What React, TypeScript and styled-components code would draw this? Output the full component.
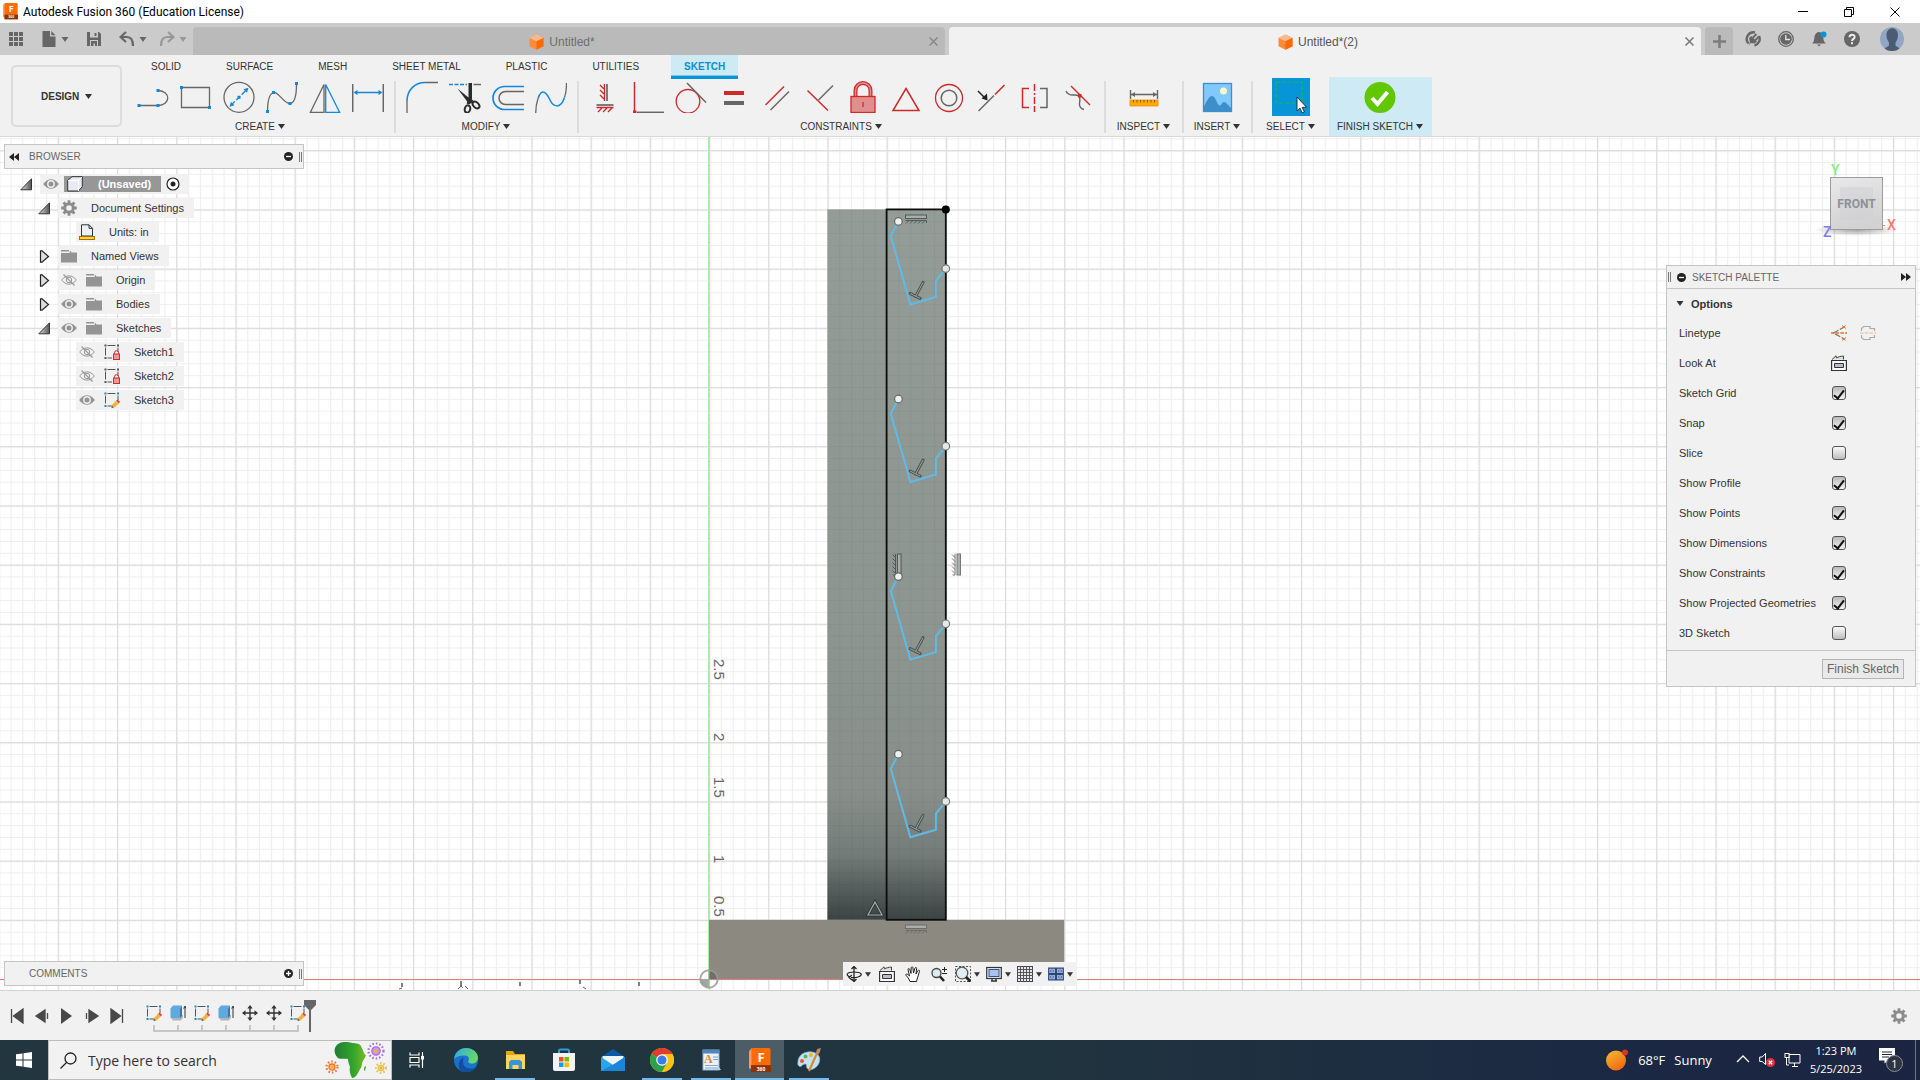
import React, { useState } from "react";
import styled, { createGlobalStyle } from "styled-components";

const UI = `"Liberation Sans", Arial, sans-serif`;
const SYS = `"Open Sans", "Noto Sans", sans-serif`;
const BLUE = "#1287e0";
const GREY = "#666";
const RED = "#cf2a2a";

const Global = createGlobalStyle`
  * { box-sizing: border-box; }
  body { margin: 0; overflow: hidden; font-family: ${UI}; color: #333; }
  button, input, select { font: inherit; color: inherit; margin: 0; }
  button { padding: 0; border: 0; background: none; display: flex; align-items: center; justify-content: center; }
  svg { display: block; flex: none; }
`;

const Shell = styled.div`
  height: 100vh;
  display: flex;
  flex-direction: column;
`;

/* ---------- window title ---------- */
const TitleBar = styled.header`
  height: 23px;
  padding-left: 3px;
  display: flex;
  align-items: center;
  gap: 5px;
  background: #fff;
  color: #000;
  font: 12px Roboto, ${SYS};
`;
const WindowButtons = styled.div`
  margin-left: auto;
  padding-right: 2px;
  display: flex;
`;
const WindowButton = styled.button`
  width: 46px;
  height: 20px;
`;

/* ---------- document tabs ---------- */
const TabStrip = styled.div`
  height: 32px;
  display: flex;
  background: #cbcbcb;
`;
const QuickBar = styled.div`
  width: 193px;
  padding-left: 8px;
  display: flex;
  align-items: center;
  gap: 17px;
`;
const QuickPair = styled.div`
  display: flex;
  gap: 12px;
`;
const QuickButton = styled.button<{ $dim?: boolean }>`
  gap: 4px;
  opacity: ${(p) => (p.$dim ? 0.5 : 1)};
`;
const Docs = styled.nav`
  flex: 1;
  display: flex;
  gap: 4px;
  padding-top: 4px;
`;
const DocTab = styled.div<{ $active?: boolean }>`
  flex: 1;
  display: flex;
  align-items: center;
  border-radius: 4px 4px 0 0;
  background: ${(p) => (p.$active ? "#f1f1f1" : "#bababa")};
  color: ${(p) => (p.$active ? "#555" : "#6e6e6e")};
  font-size: 12px;
`;
const DocTitle = styled.button`
  flex: 1;
  height: 100%;
  padding: 2px 0 0 10px;
  gap: 5px;
`;
const DocClose = styled.button`
  width: 24px;
  height: 24px;
`;
const Account = styled.div`
  width: 219px;
  padding: 0 15px 0 4px;
  display: flex;
  align-items: center;
`;
const NewTab = styled.button`
  width: 28px;
  height: 28px;
  margin: 4px 3px 0 0;
  border-radius: 4px 4px 0 0;
  background: #bababa;
`;
const AccountButton = styled.button`
  width: 33px;
  height: 28px;
  &:last-child { width: 24px; margin-left: 12px; }
`;

/* ---------- ribbon ---------- */
const Ribbon = styled.section`
  height: 82px;
  display: flex;
  background: #f1f1f1;
  border-bottom: 1px solid #d9d9d9;
  font-size: 10px;
`;
const Workspace = styled.label`
  width: 111px;
  height: 62px;
  margin: 10px 5px 9px 11px;
  border: 2px solid #dcdcdc;
  border-radius: 5px;
  display: flex;
  align-items: center;
  justify-content: center;
  gap: 5px;
  font-weight: bold;
`;
const WorkspaceSelect = styled.select`
  appearance: none;
  border: 0;
  padding: 0;
  background: none;
`;
const RibbonMain = styled.div`
  flex: 1;
`;
const RibbonTabs = styled.nav`
  height: 22px;
  padding-left: 11px;
  display: flex;
  gap: 19px;
`;
const RibbonTab = styled.button<{ $active?: boolean }>`
  height: 24px;
  padding: 2px 13px ${(p) => (p.$active ? 0 : 4)}px;
  ${(p) =>
    p.$active &&
    `background: #cdeaf5; color: #0a8fd0; font-weight: bold; border-bottom: 3px solid #0696d7; box-shadow: inset 0 -1px #7cc6e8;`}
`;
const Groups = styled.div`
  display: flex;
`;
const Group = styled.div<{ $w?: number; $last?: boolean; $highlight?: boolean }>`
  height: 52px;
  margin-top: 4px;
  padding: 0 5px 0 4px;
  ${(p) => p.$w && `width: ${p.$w}px;`}
  ${(p) => !p.$last && "border-right: 2px solid #dcdcdc;"}
  ${(p) => p.$highlight && "background: #cdeaf5; height: 59px; margin-top: 0; padding-top: 4px;"}
  display: flex;
  flex-direction: column;
  align-items: center;
`;
const Tools = styled.div`
  height: 32px;
  display: flex;
  align-items: center;
`;
const Tool = styled.button`
  width: 43px;
  height: 32px;
`;
const SelectTool = styled.button`
  width: 38px;
  height: 38px;
  background: #0696d7;
`;
const GroupLabel = styled.button`
  height: 14px;
  margin-top: 6px;
  gap: 3px;
  white-space: nowrap;
`;

/* ---------- viewport ---------- */
const Viewport = styled.main`
  flex: 1;
  min-height: 0;
  position: relative;
  background: #fff;
`;
const Scene = styled.svg`
  position: absolute;
  inset: 0;
  width: 100%;
  height: 100%;
`;
const Overlay = styled.div`
  position: relative;
  height: 100%;
  padding: 7px 4px 4px;
  display: grid;
  grid-template-columns: 1fr auto 1fr;
`;
const Side = styled.div<{ $right?: boolean }>`
  width: ${(p) => (p.$right ? 250 : 300)}px;
  justify-self: ${(p) => (p.$right ? "end" : "start")};
  display: flex;
  flex-direction: column;
`;
const PanelBar = styled.div`
  height: 25px;
  padding: 0 1px 0 4px;
  display: flex;
  align-items: center;
  gap: 6px;
  border: 1px solid #c4c4c4;
  background: #f1f1f1;
  color: #666;
  font-size: 10px;
`;
const PanelName = styled.h2`
  margin: 0;
  flex: 1;
  font-size: 10px;
  font-weight: normal;
`;
const BrowserName = styled(PanelName)`
  padding-left: 4px;
`;
const Comments = styled(PanelBar)`
  margin-top: auto;
  padding-left: 24px;
`;
const Grip = styled.span`
  width: 3px;
  height: 10px;
  border: solid #777;
  border-width: 0 1px;
`;
const Tree = styled.ul`
  margin: 3px 0 0;
  padding: 0;
  list-style: none;
  font-size: 11px;
`;
const TreeRow = styled.li<{ $level: number }>`
  height: 24px;
  padding-left: ${(p) => 16 + p.$level * 18}px;
  display: flex;
  align-items: center;
`;
const Twisty = styled.button`
  width: 12px;
  margin-right: 8px;
`;
const TwistyGap = styled.span`
  width: 20px;
`;
const Chip = styled.div`
  height: 20px;
  padding: 0 10px 0 3px;
  display: flex;
  align-items: center;
  gap: 9px;
  background: #f1f1f1;
`;
const RootChip = styled(Chip)`
  gap: 5px;
  padding-right: 8px;
`;
const NodeName = styled.span`
  margin-left: 5px;
`;
const Selected = styled.span`
  height: 16px;
  padding: 0 10px 0 3px;
  display: flex;
  align-items: center;
  gap: 15px;
  background: #979797;
  color: #fff;
  font-weight: bold;
`;
const NavBar = styled.div`
  align-self: end;
  height: 24px;
  padding: 0 4px 0 3px;
  display: flex;
  align-items: center;
  gap: 6px;
  background: #f1f1f1;
`;
const NavButton = styled.button<{ $menu?: boolean }>`
  gap: 3px;
  padding: 0 ${(p) => (p.$menu ? 0 : 2)}px;
`;
const CubeBox = styled.div`
  height: 121px;
  padding-top: 11px;
  display: flex;
  justify-content: flex-end;
`;
const Palette = styled.section`
  border: 1px solid #c4c4c4;
  background: #f1f1f1;
`;
const PaletteBar = styled(PanelBar)`
  height: 23px;
  border-width: 0 0 1px;
  padding: 0 4px 0 1px;
`;
const PaletteBody = styled.div`
  padding: 0 12px 2px;
  font-size: 11px;
`;
const OptionsHead = styled.button`
  height: 29px;
  gap: 7px;
  margin-left: -3px;
  font-weight: bold;
`;
const OptionRow = styled.div`
  height: 30px;
  display: flex;
  align-items: center;
`;
const OptionLabel = styled.label`
  width: 152px;
`;
const OptionControls = styled.div`
  display: flex;
  gap: 13px;
`;
const Check = styled.input`
  appearance: none;
  width: 14px;
  height: 14px;
  margin-left: 1px;
  border: 1px solid #555;
  border-radius: 3px;
  background: linear-gradient(#b9b9b9, #f4f4f4);
  display: grid;
  place-items: center;
  &:not(:checked) { background: linear-gradient(#fafafa, #bdbdbd); }
  &:checked::after {
    content: "";
    width: 4px;
    height: 9px;
    border: solid #111;
    border-width: 0 2px 2px 0;
    transform: rotate(38deg);
  }
`;
const PaletteFoot = styled.div`
  height: 36px;
  padding-right: 11px;
  border-top: 1px solid #c4c4c4;
  display: flex;
  align-items: center;
  justify-content: flex-end;
`;
const FinishButton = styled.button`
  height: 20px;
  padding: 0 4px;
  border: 1px solid #b4b4b4;
  background: #e9e9e9;
  color: #666;
  font-size: 12px;
`;

/* ---------- timeline ---------- */
const Timeline = styled.section`
  height: 50px;
  padding: 0 13px 0 4px;
  display: flex;
  align-items: center;
  background: #f1f1f1;
  border-top: 1px solid #d0d0d0;
`;
const Playback = styled.button`
  width: 25px;
  height: 30px;
`;
const History = styled.div`
  margin-left: 13px;
  display: flex;
  align-items: flex-end;
  height: 32px;
`;
const Feature = styled.button`
  width: 24px;
  flex-direction: column;
  gap: 3px;
`;
const Marker = styled.svg`
  margin-left: -6px;
`;
const Settings = styled.button`
  margin-left: auto;
`;

/* ---------- taskbar ---------- */
const Taskbar = styled.footer`
  height: 40px;
  display: flex;
  background: linear-gradient(90deg, #21363f, #20343f 55%, #1b2843 85%, #1b2541);
  color: #fff;
  font-family: ${SYS};
`;
const Start = styled.button`
  width: 48px;
`;
const Search = styled.label`
  width: 344px;
  padding: 0 4px 0 11px;
  display: flex;
  align-items: center;
  gap: 11px;
  background: #f2f2f2;
  border: 1px solid #bdbdbd;
`;
const SearchInput = styled.input`
  flex: 1;
  min-width: 0;
  padding: 0;
  border: 0;
  outline: 0;
  background: none;
  font-size: 14px;
  &::placeholder { color: #333; opacity: 1; }
`;
const TaskButton = styled.button<{ $open?: boolean; $current?: boolean }>`
  width: 49px;
  position: relative;
  ${(p) => p.$current && "background: #4d5d66;"}
  ${(p) =>
    p.$open &&
    `&::after { content: ""; position: absolute; bottom: 0; height: 2px; background: #76b9ed; left: ${
      p.$current ? 0 : 5
    }px; right: ${p.$current ? 0 : 4}px; }`}
`;
const Tray = styled.div`
  margin-left: auto;
  padding-right: 4px;
  display: flex;
  align-items: center;
  font-size: 13px;
`;
const Weather = styled.button`
  gap: 9px;
  margin-right: 24px;
`;
const TrayIcons = styled.div`
  display: flex;
  gap: 9px;
  margin-right: 9px;
`;
const Clock = styled.time`
  font-size: 11px;
  line-height: 18px;
  text-align: center;
  margin-right: 17px;
`;
const ShowDesktop = styled.span`
  width: 1px;
  height: 40px;
  margin-left: 12px;
  background: #6c7587;
`;

/* ---------- small drawings ---------- */
const Caret = ({ w = 7, c = "#333" }: { w?: number; c?: string }) => (
  <svg width={w} height="5" viewBox="0 0 7 5"><path d="M0 0h7L3.5 5z" fill={c} /></svg>
);
const Ico = ({ s = 16, h, children }: { s?: number; h?: number; children: React.ReactNode }) => (
  <svg width={s} height={h ?? s} viewBox={`0 0 ${s} ${h ?? s}`} fill="none">{children}</svg>
);
const Dot = ({ x, y, c = BLUE }: { x: number; y: number; c?: string }) => (
  <rect x={x - 1.5} y={y - 1.5} width="3" height="3" fill={c} />
);
const T = ({ children }: { children: React.ReactNode }) => (
  <svg width="32" height="32" viewBox="0 0 32 32" fill="none" strokeWidth="1.3">{children}</svg>
);
const Cube = () => (
  <Ico s={15} h={16}>
    <path d="M7.5 .5L14.5 4v8.300L7.5 15.800 .5 12.300V4z" fill="#ff8a3c" />
    <path d="M7.5 .5L14.5 4 7.5 7.300 .5 4z" fill="#ffb98a" />
    <path d="M14.5 4v8.300L7.5 15.800V7.300z" fill="#ff6a00" />
  </Ico>
);
const Cross = ({ s = 9, c = "#777", w = 1.5 }: { s?: number; c?: string; w?: number }) => (
  <Ico s={s}><path d={`M.5 .5L${s - 0.5} ${s - 0.5}M${s - 0.5} .5L.5 ${s - 0.5}`} stroke={c} strokeWidth={w} /></Ico>
);
const Gear = () => (
  <Ico>
    <circle cx="8" cy="8" r="4.300" stroke="#8c8c8c" strokeWidth="3" />
    {[0, 45, 90, 135].map((a) => (
      <path key={a} d="M8 .2v3M8 12.800v3" stroke="#8c8c8c" strokeWidth="2.800" transform={`rotate(${a} 8 8)`} />
    ))}
  </Ico>
);
const Eye = ({ off }: { off?: boolean }) => (
  <Ico>
    {off ? (
      <>
        <path d="M.7 8C4.500 2.500 11.500 2.500 15.300 8 11.500 13.500 4.500 13.500 .7 8z" stroke="#999" />
        <circle cx="8" cy="8" r="2.700" stroke="#999" />
        <path d="M2.500 2.500l11 11" stroke="#999" strokeWidth="1.200" />
      </>
    ) : (
      <>
        <path d="M.2 8C4.200 1.700 11.800 1.700 15.800 8 11.800 14.300 4.200 14.300 .2 8z" fill="#949494" />
        <circle cx="8" cy="8" r="3.200" fill="#949494" stroke="#f1f1f1" strokeWidth="1.400" />
      </>
    )}
  </Ico>
);
const Folder = () => (
  <Ico>
    <path d="M0 2h8v1.500H0zM9 2.500l1.500 2H16V14.500H0V5h8.500z" fill="#949494" />
  </Ico>
);
const SketchIcon = ({ locked }: { locked?: boolean }) => {
  const c = locked ? "#555" : BLUE;
  return (
    <Ico>
      <path d="M3.500 1.500h8M1.500 3.500v8M14 3.500V8M3.500 14H8" stroke="#555" />
      <rect width="2" height="2" x=".5" y=".5" fill={c} />
      <rect width="2" height="2" x="13" y=".5" fill={c} />
      <rect width="2" height="2" x=".5" y="13" fill={c} />
      {locked ? (
        <>
          <path d="M10.500 10V8.700a2 2 0 0 1 4 0V10" stroke={RED} />
          <rect x="9.500" y="10" width="6" height="5.500" fill="#e79a9a" stroke={RED} />
        </>
      ) : (
        <>
          <path d="M7.500 16l.8-3.500 4-4 2.700 2.700-4 4z" fill="#f0b541" />
          <path d="M12.300 8.800l1.300-1.300L16 10l-1.200 1.200z" fill="#e33" />
          <path d="M7.500 16l.6-2.200 1.700 1.700z" fill="#555" />
        </>
      )}
    </Ico>
  );
};
const ExtrudeIcon = () => (
  <Ico>
    <path d="M1 13l2 2.500h8l2-3V10H1z" fill="#b5b5b5" />
    <path d="M.5 3.500L3 .5h9l-2 3V13H.5z" fill="#5ea9de" />
    <path d="M10 3.500L12 .5V11L10 13z" fill="#2f7db8" />
    <path d="M15 13V2M13.700 3.500L15 1l1 2.500" stroke="#333" />
  </Ico>
);
const MoveIcon = () => (
  <Ico>
    <path d="M8 2v12M2 8h12" stroke="#333" strokeWidth="1.400" />
    <path d="M8 0l2.700 3.500H5.300zM8 16l2.700-3.500H5.300zM0 8l3.500-2.700v5.400zM16 8l-3.500-2.700v5.400z" fill="#333" />
  </Ico>
);
const Round = ({ plus }: { plus?: boolean }) => (
  <Ico s={9}>
    <circle cx="4.500" cy="4.500" r="4.500" fill="#222" />
    <path d={plus ? "M2 4.500h5M4.500 2v5" : "M2 4.500h5"} stroke="#fff" strokeWidth="1.300" />
  </Ico>
);
const Twist = ({ open }: { open?: boolean }) => (
  <Ico s={12} h={13}>
    {open ? (
      <path d="M11.500 .8v11H.8z" fill="url(#twist)" stroke="#333" />
    ) : (
      <path d="M2.500 .8H4l6.500 5.700L4 12.200H2.500z" fill="#ddd" stroke="#222" strokeWidth="1.200" />
    )}
    <defs><linearGradient id="twist"><stop stopColor="#ddd" /><stop offset="1" stopColor="#555" /></linearGradient></defs>
  </Ico>
);
const LookAt = () => (
  <Ico>
    <path d="M.6 5.500h14.800v10H.6z" fill="#fff" stroke="#333" strokeWidth="1.200" />
    <path d="M3.500 8.500h9v4h-9z" fill="#b9bccb" stroke="#333" />
    <path d="M1 4.500L5 .8l.5 2c2-1 4-1.500 7-1.800v3.500" fill="#ddd" stroke="#444" />
  </Ico>
);
const FusionLogo = ({ s }: { s: number }) => (
  <svg width={s} height={s * 1.1} viewBox="0 0 22 24">
    <path d="M0 3l3-3v20l-2 1-1-1z" fill="#ff9a55" />
    <rect x="2.500" width="19" height="18" rx="1.500" fill="#ff6b00" />
    <path d="M2 17h20v7H2z" fill="#8c3400" />
    <text x="12" y="13.500" fontFamily={SYS} fontWeight="bold" fontSize="13" fill="#fff" textAnchor="middle">F</text>
    <text x="12" y="22.500" fontFamily={SYS} fontWeight="bold" fontSize="5" fill="#fff" textAnchor="middle">360</text>
  </svg>
);

/* ---------- ribbon tools ---------- */
const CREATE: [string, React.ReactNode][] = [
  ["Line", <T><path d="M2 24.500h19c13-.5 13-14.500 0-15" stroke={GREY} /><Dot x={2} y={24.500} /><Dot x={21} y={24.500} /><Dot x={21} y={9.500} /></T>],
  ["Rectangle", <T><path d="M1.500 6.500h28v20h-28z" stroke={GREY} /><Dot x={1.500} y={6.500} /><Dot x={29.500} y={26.500} /></T>],
  ["Circle", <T><circle cx="16" cy="16.300" r="15" stroke={GREY} /><path d="M8 24.300L24 8.300" stroke={BLUE} strokeDasharray="5.500 2" /><path d="M25.500 6.800l-1.500 5-3.500-3.500zM6.500 25.800l1.500-5 3.500 3.500z" fill={BLUE} /><Dot x={16} y={16.300} /></T>],
  ["Spline", <T><path d="M1.500 31C1.500 22 3 13 7.500 11.500S18 23 24 22.500 30.500 9 30.500 3" stroke={GREY} /><Dot x={1.500} y={30.500} /><Dot x={7.500} y={11.500} /><Dot x={24} y={22.500} /><Dot x={30.500} y={2.500} /></T>],
  ["Mirror", <T><path d="M15 3.500v28H1.300z" stroke={GREY} /><path d="M16.700 3.500v28h14z" stroke={BLUE} /></T>],
  ["Dimension", <T><path d="M.7 3v28M31.300 3v28" stroke={GREY} strokeWidth="1.500" /><path d="M3 11.500h26" stroke={BLUE} strokeWidth="1.500" /><path d="M1.500 11.500l4-2.500v5zM30.500 11.500l-4-2.500v5z" fill={BLUE} /></T>],
];
const MODIFY: [string, React.ReactNode][] = [
  ["Fillet", <T><path d="M1 32.500V20M19 1.500h13" stroke={GREY} /><path d="M1 20C1 9 9 1.500 19 1.500" stroke={BLUE} strokeWidth="1.500" /></T>],
  ["Trim", <T><path d="M0 3.500h18" stroke={BLUE} strokeDasharray="4 1.500" strokeWidth="1.600" /><path d="M24.500 3.500H32" stroke={GREY} strokeWidth="1.500" /><path d="M19.500 2H23v16l-3.500 4.500zM8.500 7.500L20 17l3 5-3 1z" fill="#2b2b2b" /><path d="M21.500 19l2 2M20.500 19l-1.500 4" stroke="#2b2b2b" strokeWidth="3" /><ellipse cx="18.500" cy="28" rx="2.700" ry="3.700" transform="rotate(15 18.500 28)" stroke="#2b2b2b" strokeWidth="2" /><ellipse cx="27" cy="24" rx="2.600" ry="4" transform="rotate(-45 27 24)" stroke="#2b2b2b" strokeWidth="2" /></T>],
  ["Offset", <T><path d="M32 5.500H12.500a11.500 11.500 0 0 0 0 23H32" stroke={BLUE} strokeWidth="1.700" /><path d="M32 10.500H13.500a6.500 6.500 0 0 0 0 13H32" stroke={GREY} strokeWidth="1.500" /></T>],
  ["Blend curve", <T><path d="M.7 32.500C.7 27 1.500 22 3 17.500M29.500 16.500c1.500-4 2-9 2-14.500" stroke={GREY} /><path d="M3 17.500c4-12 9-5 12 1.500s10.500 10 14.500-2.500" stroke={BLUE} strokeWidth="1.500" /></T>],
];
const CONSTRAINTS: [string, React.ReactNode][] = [
  ["Horizontal/Vertical", <T><path d="M15.500 3v17M11 4l4 4M11 9l4 4M11 14l4 4" stroke={RED} /><path d="M18 3v17" stroke={GREY} strokeWidth="1.700" /><path d="M7.500 24h17" stroke={GREY} strokeWidth="1.700" /><path d="M7.500 26.500h17M13 27l-4 4M18 27l-4 4M23 27l-4 4" stroke={RED} /></T>],
  ["Coincident", <T><path d="M2.500 1v30" stroke={RED} strokeWidth="1.500" /><path d="M5 31.300h27" stroke={GREY} strokeWidth="1.500" /><rect x="1" y="29.500" width="3.500" height="3" fill={RED} /></T>],
  ["Tangent", <T><circle cx="13" cy="20.300" r="11.800" stroke={RED} /><path d="M12 2l19 19.500" stroke={GREY} strokeWidth="1.500" /></T>],
  ["Equal", <T><path d="M6 10h20v4H6z" fill={RED} /><path d="M6 20h20v4H6z" fill={GREY} /></T>],
  ["Parallel", <T><path d="M4.500 24L23 5.500" stroke={RED} strokeWidth="1.500" /><path d="M9.500 29L28 10.500" stroke={GREY} strokeWidth="1.500" /></T>],
  ["Perpendicular", <T><path d="M3.500 9.500l20.500 20" stroke={RED} strokeWidth="1.500" /><path d="M14.500 19L29 4.500" stroke={GREY} strokeWidth="1.500" /></T>],
  ["Fix", <T><path d="M8.500 15.500V9.500a7.500 7.500 0 0 1 15 0v6" stroke={RED} strokeWidth="4" /><path d="M8.500 15.500V9.500a7.500 7.500 0 0 1 15 0v6" stroke="#e08f8f" strokeWidth="1.500" /><rect x="4" y="15.500" width="24" height="16" fill="#e08f8f" stroke={RED} /><path d="M16 21v5" stroke={RED} /></T>],
  ["Midpoint", <T><path d="M16 7.500l13 22H3z" stroke={RED} strokeWidth="1.500" /></T>],
  ["Concentric", <T><circle cx="16" cy="17" r="13.500" stroke={RED} /><circle cx="16" cy="17" r="7.800" stroke={GREY} strokeWidth="1.500" /></T>],
  ["Collinear", <T><path d="M2.500 30L18 14.500" stroke={GREY} strokeWidth="1.500" /><path d="M19 13.500L28.500 4" stroke={RED} strokeWidth="1.600" /><path d="M2 10l6 6" stroke="#222" strokeWidth="1.500" /><path d="M11.500 19.500l-6-2 5.500-5z" fill="#222" /></T>],
  ["Symmetry", <T><path d="M10 7.500H3.500v19H10" stroke={RED} strokeWidth="1.500" /><path d="M15.500 3v7M15.500 12v2M15.500 16v7M15.500 25v6" stroke={RED} strokeWidth="1.500" /><path d="M21 7.500h7v19h-7" stroke={GREY} strokeWidth="1.500" /></T>],
  ["Curvature", <T><path d="M9 5l19 19" stroke={RED} strokeWidth="1.500" /><path d="M4 10c2 5 6 4 9 4 6 0 5 5 4.500 8s1 6 4.500 6.500" stroke={GREY} strokeWidth="1.400" /><rect x="16" y="13" width="3.500" height="3.500" fill={RED} /></T>],
];

const ToolGroup = ({ name, tools }: { name: string; tools: [string, React.ReactNode][] }) => (
  <Group>
    <Tools>{tools.map(([n, icon]) => <Tool key={n} aria-label={n}>{icon}</Tool>)}</Tools>
    <GroupLabel>{name}<Caret /></GroupLabel>
  </Group>
);

/* ---------- model scene ---------- */
const U = 59.2;
const m = U / 5;
const HGlyph = ({ x, y, rot, c = "#50585a" }: { x: number; y: number; rot?: boolean; c?: string }) => (
  <g transform={`translate(${x} ${y})${rot ? " rotate(90)" : ""}`} stroke={c} fill="none">
    <rect x="-10.500" y="-4" width="21" height="3.500" fill="#a9aeac" />
    <path d="M-10.500 1.500h21v2.500M-7 1.500l-3 3M-3 1.500l-3 3M1 1.500l-3 3M5 1.500l-3 3M9 1.500l-3 3" />
  </g>
);
const Model = () => (
  <Scene aria-label="Sketch canvas">
    <defs>
      <pattern id="minor" x="709" y="842" width={m} height={m} patternUnits="userSpaceOnUse">
        <path d={`M0 0H${m}M0 0V${m}`} stroke="#eee" strokeWidth="2.200" />
      </pattern>
      <pattern id="major" x="709" y="842" width={U} height={U} patternUnits="userSpaceOnUse">
        <path d={`M0 0H${U}M0 0V${U}`} stroke="#dcdcdc" strokeWidth="2.400" />
      </pattern>
      <pattern id="onbody" width={m} height={m} patternUnits="userSpaceOnUse">
        <path d={`M0 0H${m}M0 0V${m}`} stroke="#000" strokeOpacity=".04" strokeWidth="2" />
      </pattern>
      <linearGradient id="steel" x1="0" y1="0" x2="0" y2="1">
        <stop stopColor="#949c98" />
        <stop offset=".6" stopColor="#8d9591" />
        <stop offset=".82" stopColor="#888f8b" />
        <stop offset=".91" stopColor="#737b78" />
        <stop offset="1" stopColor="#3b4343" />
      </linearGradient>
    </defs>
    <rect width="100%" height="100%" fill="url(#minor)" />
    <rect width="100%" height="100%" fill="url(#major)" />
    <path d="M709 0V842" stroke="#aeeaae" strokeWidth="2" />
    <path d="M0 842.500H4000" stroke="#e07f7f" />
    <g transform="translate(709 842)">
      <rect x="0" y={-U} width={6 * U} height={U} fill="#8c8981" />
      <rect x={2 * U} y={-13 * U} width={2 * U} height={12 * U} fill="url(#steel)" />
      <rect x={2 * U} y={-13 * U} width={2 * U} height={12 * U} fill="url(#onbody)" />
      <rect x={3 * U} y={-13 * U} width={U} height={12 * U} fill="none" stroke="#0c0c0c" strokeWidth="1.800" />
      <HGlyph x={207} y={-760} />
      <HGlyph x={207} y={-50} c="#6e6c67" />
      <HGlyph x={188} y={-414.500} rot />
      <HGlyph x={247.500} y={-414.500} rot c="#777" />
      {[0, 1, 2, 3].map((i) => (
        <g key={i} transform={`translate(${3 * U} ${(-13 + 3 * i) * U})`}>
          <path d="M11.800 12L4.200 26.500 23.800 95 49.300 87.500V71.500L59.200 59.500" fill="none" stroke="#5fbbe6" strokeWidth="2" />
          <path d="M36.500 73l-7.500 14M23.500 84l10 5" stroke="#4d5653" strokeWidth="3" fill="none" strokeLinecap="round" />
          <path d="M36.500 73l-7.500 14M23.500 84l10 5" stroke="#9ba19e" strokeWidth="1" fill="none" />
          <circle cx="11.800" cy="12" r="3.800" fill="#eef0ef" stroke="#666" strokeWidth="1.200" />
          <circle cx="59.200" cy="59.200" r="3.800" fill="#e6e8e7" stroke="#777" strokeWidth="1.200" />
        </g>
      ))}
      <circle cx={4 * U} cy={-13 * U} r="4" fill="#000" />
      <path d="M166 -77l7 13h-14z" fill="none" stroke="#2f3636" strokeWidth="3" />
      <path d="M166 -77l7 13h-14z" fill="none" stroke="#a8adab" strokeWidth="1.200" />
      {([["2.5", -320], ["2", -246], ["1.5", -202], ["1", -124], ["0.5", -83]] as [string, number][]).map(([t, y]) => (
        <text key={t} transform={`translate(5 ${y}) rotate(90)`} fontFamily={UI} fontSize="15" fill="#666">{t}</text>
      ))}
      <path d="M-307 4v4M-248 2v5M-189 3v4M-129 1v4M-70 3v4" stroke="#333" strokeWidth="1.200" />
      <path d="M-310 10l3-1M-251 10l3-3 2 2M-244 7l3 3M-126 8l3 2" stroke="#666" fill="none" />
      <path d="M0 0V8.500A8.500 8.500 0 0 1 -8.500 0z" fill="#a5a5a5" />
      <path d="M0 0V-8.500A8.500 8.500 0 0 1 8.500 0z" fill="#6f6e69" />
      <circle r="8.700" fill="none" stroke="#9a9a9a" strokeOpacity=".85" strokeWidth="2" />
      <path d="M0 -9V10" stroke="#7fc97f" />
    </g>
  </Scene>
);

const ViewCube = () => (
  <svg width="100" height="90" viewBox="0 0 100 90" role="img" aria-label="View cube">
    <defs>
      <linearGradient id="face" x1="0" y1="0" x2=".3" y2="1"><stop stopColor="#e9e9e9" /><stop offset="1" stopColor="#d2d2d2" /></linearGradient>
      <radialGradient id="shade"><stop stopColor="#000" stopOpacity=".35" /><stop offset="1" stopColor="#000" stopOpacity="0" /></radialGradient>
    </defs>
    <ellipse cx="40" cy="75" rx="42" ry="6" fill="url(#shade)" />
    <text x="15" y="20" fontFamily="Roboto, sans-serif" fontWeight="500" fontSize="14" fill="#7df07d">Y</text>
    <rect x="14.500" y="22.500" width="52" height="52" fill="url(#face)" stroke="#9c9c9c" />
    <rect x="24" y="32" width="33" height="33" fill="#cfd0d6" opacity=".5" />
    <text x="40.500" y="53" fontFamily="Roboto, sans-serif" fontWeight="bold" fontSize="12" fill="#8e9096" textAnchor="middle">FRONT</text>
    <text x="7" y="82" fontFamily="Roboto, sans-serif" fontWeight="500" fontSize="14" fill="#7d7df2">Z</text>
    <text x="71" y="75" fontFamily="Roboto, sans-serif" fontWeight="500" fontSize="14" fill="#f77">X</text>
    <path d="M67 70.500h2" stroke="#f77" />
  </svg>
);

/* ---------- browser tree ---------- */
type Node = { level: number; name: string; twist?: "open" | "closed"; icons: React.ReactNode[] };
const NODES: Node[] = [
  { level: 1, name: "Document Settings", twist: "open", icons: [<Gear />] },
  { level: 2, name: "Units: in", icons: [<Ico><path d="M2.500 12V.8H10l3.500 3.500V12z" fill="#eef0f8" stroke="#333" /><path d="M10 .8v3.500h3.500" stroke="#333" /><rect x=".5" y="12.500" width="15" height="3" fill="#ffd43b" stroke="#a66d00" /></Ico>] },
  { level: 1, name: "Named Views", twist: "closed", icons: [<Folder />] },
  { level: 1, name: "Origin", twist: "closed", icons: [<Eye off />, <Folder />] },
  { level: 1, name: "Bodies", twist: "closed", icons: [<Eye />, <Folder />] },
  { level: 1, name: "Sketches", twist: "open", icons: [<Eye />, <Folder />] },
  { level: 2, name: "Sketch1", icons: [<Eye off />, <SketchIcon locked />] },
  { level: 2, name: "Sketch2", icons: [<Eye off />, <SketchIcon locked />] },
  { level: 2, name: "Sketch3", icons: [<Eye />, <SketchIcon />] },
];

const OPTIONS: [string, boolean][] = [
  ["Sketch Grid", true], ["Snap", true], ["Slice", false], ["Show Profile", true], ["Show Points", true],
  ["Show Dimensions", true], ["Show Constraints", true], ["Show Projected Geometries", true], ["3D Sketch", false],
];

const NAV: [string, boolean, React.ReactNode][] = [
  ["Orbit", true, <Ico><path d="M8 1v14M5.500 3L8 .5 10.500 3M5.500 13L8 15.500l2.500-2.500" stroke="#222" strokeWidth="1.300" /><path d="M4 11C-1 9 1 6 8 6s10 3 4 5c-2 .7-5 .7-7 .5M6 9l-3 2.500L6 14" stroke="#222" strokeWidth="1.200" /></Ico>],
  ["Look at", false, <LookAt />],
  ["Pan", false, <Ico><path d="M5 15.500C4 12 1 10 .8 8.500c1-1 2.200 0 3.700 1.500L3 3.500c0-1.200 1.500-1.200 1.800 0L6 7.500 6.200 1.700c.2-1.200 1.600-1.200 1.700 0L8.500 7 10 2c.5-1 1.700-.7 1.600.5L11 8l2-3.500c.7-.8 1.800-.3 1.500.8L12.500 12l-1 3.500z" fill="#fff" stroke="#222" /></Ico>],
  ["Zoom", false, <Ico><circle cx="5.500" cy="7" r="4.500" fill="#dcebef" stroke="#444" strokeWidth="1.300" /><path d="M9 10.500l4 4.500" stroke="#222" strokeWidth="2.600" /><path d="M11 3.500h5M13.500 1v5M11 7.500h5" stroke="#222" /></Ico>],
  ["Fit", true, <Ico><path d="M.5 .5h15v15H.5z" stroke="#555" strokeDasharray="2 1.500" /><circle cx="7" cy="7" r="5.800" fill="#dfeef0" stroke="#555" strokeWidth="1.300" /><path d="M11 11l4.500 4.500" stroke="#222" strokeWidth="2.800" /></Ico>],
  ["Display settings", true, <Ico><rect x=".7" y="1.500" width="14.600" height="11" fill="#eee" stroke="#333" strokeWidth="1.200" /><rect x="3" y="3.500" width="10" height="7" fill="#a9c4ec" stroke="#33548c" /><path d="M5 15h6M6 13v2M10 13v2" stroke="#333" strokeWidth="1.300" /></Ico>],
  ["Grid and snaps", true, <Ico><rect x=".5" y=".5" width="15" height="15" fill="#e8e9ee" stroke="#444" /><path d="M3.500 0v16M6.500 0v16M9.500 0v16M12.500 0v16M0 3.500h16M0 6.500h16M0 9.500h16M0 12.500h16" stroke="#555" /></Ico>],
  ["Viewports", true, <Ico><path d="M.7 2.200h6.800v5.300H.7zM8.500 2.200h6.800v5.300H8.500zM.7 8.500h6.800v5.300H.7zM8.500 8.500h6.800v5.300H8.500z" fill="#a9c4ec" stroke="#2d4673" strokeWidth="1.200" /><path d="M2.500 4h3v2h-3zM10.500 4h3v2h-3zM2.500 10h3v2h-3zM10.500 10h3v2h-3z" stroke="#5e7fb5" /></Ico>],
];

const PLAY: [string, string][] = [
  ["First", "M2.500 1v14M14 1v14L4.500 8z"], ["Previous", "M11 2v12L2 8zM13.500 5v6"], ["Play", "M2 0v16l11-8z"],
  ["Next", "M5 2v12l9-6zM2.500 5v6"], ["Last", "M2 1v14l9.500-7zM13.500 1v14"],
];
const HISTORY = ["s", "e", "s", "e", "m", "m", "s"];

const Flower = ({ x, y, r, c, d }: { x: number; y: number; r: number; c: string; d: string }) => (
  <g>
    <circle cx={x} cy={y} r={r} fill="none" stroke={c} strokeWidth="2.200" strokeDasharray="1.500 2" />
    <circle cx={x} cy={y} r={r * 0.55} fill={d} stroke={c} strokeWidth="1.300" />
    <circle cx={x} cy={y} r={r * 0.25} fill="#ffb300" />
  </g>
);
const SearchArt = () => (
  <svg width="62" height="38" viewBox="0 0 62 38" fill="none">
    <defs><linearGradient id="afr"><stop stopColor="#217d33" /><stop offset=".6" stopColor="#33a52b" /><stop offset="1" stopColor="#7cb928" /></linearGradient></defs>
    <path d="M11 5c3-4 7-4 10-4 3-.5 5 1 8 1 3 1 5 0 7 3l3 7c1 2 2 2 2 2-1 4-4 6-4 9s-2 5-3 7-3 7-7 7c-2-4-3-8-2-11-1-3-2-5-2-8-4-1-9 1-11-2-3-4-3-8-1-11z" fill="url(#afr)" />
    <path d="M41 25l-1 5-1-1 .5-3z" fill="#2f9a2c" />
    <Flower x={51} y={10} r={7.500} c="#a56be0" d="#c79af0" />
    <Flower x={7} y={26} r={5.500} c="#f0703c" d="#ffbf4d" />
    <Flower x={56} y={27} r={4.800} c="#e9c14a" d="#f4dd8a" />
  </svg>
);

const TASKS: [string, boolean, boolean, React.ReactNode][] = [
  ["Task view", false, false, <Ico><path d="M1 .5V3h9V.5M1 15.500V13h9v2.500M1 5.500h9v5H1zM13.500 0v16" stroke="#fff" strokeWidth="1.200" /><rect x="12" y="4" width="3" height="3.500" fill="#fff" /></Ico>],
  ["Edge", false, false, <Ico s={24}><defs><linearGradient id="eg" x1="0" y1="0" x2="1" y2=".3"><stop stopColor="#31a8e8" /><stop offset="1" stopColor="#67d86b" /></linearGradient></defs><circle cx="12" cy="12" r="12" fill="#1a72cc" /><path d="M0 11C1 4 6 0 12 0c7 0 12 5 12 9.500 0 4-3 6-6 6s-4.500-1-3.500-3 .5-4.500-3.500-5C6.500 7 2 8.500 0 11z" fill="url(#eg)" /><path d="M9 24C3 21 3 12 10 9.500 7.500 14 9 21 18 20.500c2 0 3-.5 4-1C20 22.500 14 25.500 9 24z" fill="#0f4f9e" /></Ico>],
  ["File Explorer", true, false, <Ico s={24}><path d="M3 3h7l2 3h10v15H3z" fill="#e8a514" /><path d="M3 7h19v14H3z" fill="#ffd65e" /><path d="M6 21v-7l2-2h9l2 2v7h-3.500v-4h-6v4z" fill="#3b92dd" /></Ico>],
  ["Microsoft Store", false, false, <Ico s={24}><path d="M7 6V3q0-1.500 1.500-1.500h7Q17 1.500 17 3v3" stroke="#2f9bdc" strokeWidth="2" /><path d="M1 5h22v16q0 2-2 2H3q-2 0-2-2z" fill="#f3f3f3" /><path d="M7 9h4.500v4.500H7z" fill="#f25022" /><path d="M12.500 9H17v4.500h-4.500z" fill="#7fba00" /><path d="M7 14.500h4.500V19H7z" fill="#00a4ef" /><path d="M12.500 14.500H17V19h-4.500z" fill="#ffb900" /></Ico>],
  ["Mail", false, false, <Ico s={24}><path d="M0 9L12 1l12 8v13H0z" fill="#0c59a4" /><path d="M1.500 8h21v6L12 19 1.500 14z" fill="#eef4fa" /><path d="M0 9l12 8 12-8v14H0z" fill="#2ba5ea" /><path d="M0 23l14-7.500L24 9v14z" fill="#1b86d8" /></Ico>],
  ["Chrome", true, false, <Ico s={24}><circle cx="12" cy="12" r="12" fill="#fbc116" /><path d="M12 12L1.600 6A12 12 0 0 1 22.400 6z" fill="#e33b2e" /><path d="M12 12L1.600 6A12 12 0 0 0 12 24l5-9z" fill="#2da04c" /><path d="M22.400 6H12v6l5 3-5 9A12 12 0 0 0 22.400 6z" fill="#fbc116" /><circle cx="12" cy="12" r="5.800" fill="#fff" /><circle cx="12" cy="12" r="4.600" fill="#3a7cec" /></Ico>],
  ["WordPad", true, false, <Ico s={20} h={22}><rect x="2" y="1" width="16" height="20" fill="#e9f1fa" stroke="#8fb0d3" /><path d="M2 1h16v3.500H2z" fill="#4f86c0" /><text x="3" y="14" fontFamily="Liberation Serif" fontWeight="bold" fontSize="12" fill="#f08020">A</text><path d="M12 8h5M12 10.500h5M4 16.500h13M4 19h13" stroke="#7ea6d6" /><path d="M13 21h7l-2-3z" fill="#b8cbe0" /></Ico>],
  ["Fusion 360", true, true, <FusionLogo s={22} />],
  ["Paint", true, false, <Ico s={24}><path d="M1 14C1 7 8 3 15 4s9 6 7 11-8 8-11 6 0-5-3-5-4 4-6 2-1-3-1-4z" fill="#c4e2f1" stroke="#86b5d0" strokeWidth=".7" /><circle cx="5" cy="13" r="2" fill="#e8543c" /><circle cx="8.500" cy="8.500" r="2" fill="#55b948" /><circle cx="14" cy="7" r="2" fill="#f6b21b" /><path d="M21 3L12 23" stroke="#d98a35" strokeWidth="2.200" /><path d="M19 6l1-5 4-1-1.500 5-2 2.500z" fill="#b98a62" /></Ico>],
];

export default function App() {
  const [options, setOptions] = useState(OPTIONS);
  const toggle = (i: number) => setOptions(options.map((o, j) => (j === i ? [o[0], !o[1]] : o)));
  return (
    <Shell>
      <Global />
      <TitleBar>
        <FusionLogo s={15} />
        Autodesk Fusion 360 (Education License)
        <WindowButtons>
          <WindowButton aria-label="Minimize"><Ico s={10}><path d="M0 4.500h10" stroke="#000" /></Ico></WindowButton>
          <WindowButton aria-label="Restore"><Ico s={10}><path d="M.5 2.500h7v7h-7zM2.500 2.500v-2h7v7h-2" stroke="#000" /></Ico></WindowButton>
          <WindowButton aria-label="Close"><Cross s={10} c="#000" w={1} /></WindowButton>
        </WindowButtons>
      </TitleBar>

      <TabStrip>
        <QuickBar>
          <QuickButton aria-label="Data panel"><Ico>{[1, 6, 11].map((x) => [1, 6, 11].map((y) => <rect key={`${x}-${y}`} x={x} y={y} width="4" height="4" fill="#666" />))}</Ico></QuickButton>
          <QuickButton aria-label="File"><Ico><path d="M1.500 0H9v5.500h5.500V16h-13z" fill="#666" /><path d="M10.300 0l4.200 4.300h-4.200z" fill="#666" /></Ico><Caret w={8} c="#666" /></QuickButton>
          <QuickButton aria-label="Save"><Ico><path d="M1 1h12l2 2v12H1z" fill="#666" /><path d="M4 1h8v5.500H4zM4 9h8v6H4z" fill="#cbcbcb" /><path d="M8.500 2h2v3h-2zM5 10h6v5H9v-2.500H7.500V15H5z" fill="#666" /></Ico></QuickButton>
          <QuickPair>
            <QuickButton aria-label="Undo"><Ico><path d="M3 6h5c4 0 6 3 6 9" stroke="#666" strokeWidth="2.200" /><path d="M7 1L1.500 6 7 11" stroke="#666" strokeWidth="2.200" /></Ico><Caret w={8} c="#666" /></QuickButton>
            <QuickButton $dim aria-label="Redo"><Ico><path d="M13 6H8c-4 0-6 3-6 9" stroke="#666" strokeWidth="2.200" /><path d="M9 1l5.500 5L9 11" stroke="#666" strokeWidth="2.200" /></Ico><Caret w={8} c="#666" /></QuickButton>
          </QuickPair>
        </QuickBar>
        <Docs>
          <DocTab><DocTitle><Cube />Untitled*</DocTitle><DocClose aria-label="Close tab"><Cross c="#888" /></DocClose></DocTab>
          <DocTab $active><DocTitle><Cube />Untitled*(2)</DocTitle><DocClose aria-label="Close tab"><Cross /></DocClose></DocTab>
        </Docs>
        <Account>
          <NewTab aria-label="New tab"><Ico s={13}><path d="M6.500 0v13M0 6.500h13" stroke="#7c7c7c" strokeWidth="2.600" /></Ico></NewTab>
          <AccountButton aria-label="Extensions"><Ico><path d="M3.500 12.500A6.700 6.700 0 0 1 10 1.500M14 5a6.700 6.700 0 0 1-4.500 9.500" stroke="#666" strokeWidth="2.400" /><path d="M3.500 14.500L5 11.500 4 7l2.500-2L12 10.500 9.500 12.500 6 12z" fill="#666" /><path d="M8 6.500L11.500 3M10.500 9L14 5.500" stroke="#666" strokeWidth="1.800" /></Ico></AccountButton>
          <AccountButton aria-label="Job status"><Ico><circle cx="8" cy="8" r="7.300" stroke="#666" strokeWidth="1.300" /><circle cx="8" cy="8" r="5.800" fill="#666" /><path d="M7.800 4v4.500H12" stroke="#e5e5e5" strokeWidth="1.300" /></Ico></AccountButton>
          <AccountButton aria-label="Notifications"><Ico><path d="M1 12.500c2-1.500 2-3 2.300-5.500C3.600 3.500 5.500 1 8 1s4 3 4.300 6c.3 2.500.7 4 2.700 5.500z" fill="#666" /><path d="M6 13.500h4l-2 2z" fill="#666" /><circle cx="12.500" cy="3.500" r="3" fill="#0696d7" /></Ico></AccountButton>
          <AccountButton aria-label="Help"><Ico><circle cx="8" cy="8" r="8" fill="#666" /><path d="M5.500 6.300c0-3.500 5.200-3.300 5.200-.3C10.700 8 8 7.800 8 10" stroke="#eee" strokeWidth="1.900" /><rect x="7" y="11.200" width="2" height="2" fill="#eee" /></Ico></AccountButton>
          <AccountButton aria-label="Profile"><Ico s={24}><defs><clipPath id="av"><circle cx="12" cy="12" r="12" /></clipPath></defs><g clipPath="url(#av)"><rect width="24" height="24" fill="#91a6c4" /><path d="M6.500 8c0-9 11.500-9 11.500 0 0 4-1.500 6-2.500 7.500v3c2 2 5 2 6 5.500H3c1-3.500 4-3.500 6-5.500v-3C8 14 6.500 12 6.500 8z" fill="#4b5b73" /></g></Ico></AccountButton>
        </Account>
      </TabStrip>

      <Ribbon>
        <Workspace>
          <WorkspaceSelect aria-label="Workspace"><option>DESIGN</option></WorkspaceSelect>
          <Caret />
        </Workspace>
        <RibbonMain>
          <RibbonTabs>
            {["SOLID", "SURFACE", "MESH", "SHEET METAL", "PLASTIC", "UTILITIES", "SKETCH"].map((t) => (
              <RibbonTab key={t} $active={t === "SKETCH"}>{t}</RibbonTab>
            ))}
          </RibbonTabs>
          <Groups>
            <ToolGroup name="CREATE" tools={CREATE} />
            <ToolGroup name="MODIFY" tools={MODIFY} />
            <ToolGroup name="CONSTRAINTS" tools={CONSTRAINTS} />
            <Group $w={78}>
              <Tools><Tool aria-label="Measure"><T><path d="M2.500 9v9M29.500 9v9M3 13.500h26" stroke={GREY} strokeWidth="1.400" /><path d="M3 13.500l4-2.500v5zM29 13.500l-4-2.500v5z" fill={GREY} /><rect x="2" y="19" width="28" height="6" fill="#ffa800" stroke="#e59500" strokeWidth=".8" /><path d="M5.500 19v2.500M9 19v2.500M12.500 19v2.500M16 19v2.500M19.500 19v2.500M23 19v2.500M26.500 19v2.500" stroke="#8a5b00" strokeWidth="1" /></T></Tool></Tools>
              <GroupLabel>INSPECT<Caret /></GroupLabel>
            </Group>
            <Group $w={69}>
              <Tools><Tool aria-label="Insert image"><T><rect x="2.500" y="2.500" width="28" height="28" fill="#80c9ff" stroke="#3c8fcb" /><circle cx="22.500" cy="10" r="3.500" fill="#fff6c8" /><path d="M3 25c3-5 5-10 8-10 4 0 5 10 8 9.500 2-.5 2-3.500 4-3.500s4 3 7 6v3H3z" fill="#3c8fcb" /></T></Tool></Tools>
              <GroupLabel>INSERT<Caret /></GroupLabel>
            </Group>
            <Group $w={76} $last>
              <Tools><SelectTool aria-label="Select"><svg width="38" height="38" viewBox="0 0 38 38" fill="none"><path d="M4 4h26v21H4z" stroke="#1fb25a" strokeWidth="1.200" strokeDasharray="4 2" /><path d="M25 19v14l3-2.800 2.200 4.800 2.200-1-2.200-4.600 4.300-.2z" fill="#fff" stroke="#222" strokeWidth=".9" /></svg></SelectTool></Tools>
              <GroupLabel>SELECT<Caret /></GroupLabel>
            </Group>
            <Group $w={103} $last $highlight>
              <Tools><Tool aria-label="Finish sketch"><T><circle cx="16" cy="16.500" r="15.500" fill="#61c800" /><path d="M8 17l5.500 6L23.500 11" stroke="#fff" strokeWidth="4" /></T></Tool></Tools>
              <GroupLabel>FINISH SKETCH<Caret /></GroupLabel>
            </Group>
          </Groups>
        </RibbonMain>
      </Ribbon>

      <Viewport>
        <Model />
        <Overlay>
          <Side>
            <PanelBar>
              <Ico s={10} h={8}><path d="M5 0v8L0 4zM10 0v8L5 4z" fill="#222" /></Ico>
              <BrowserName>BROWSER</BrowserName>
              <Round /><Grip />
            </PanelBar>
            <Tree>
              <TreeRow $level={0}>
                <Twisty aria-label="Collapse"><Twist open /></Twisty>
                <RootChip>
                  <Eye />
                  <Selected>
                    <Ico><path d="M.7 4.500L5 .7h10.300v10L11.500 15H.7z" fill="#e8eaf5" stroke="#333" /><path d="M1 4.500h10.500V15M11.500 4.500L15 1" stroke="#fff" /></Ico>
                    (Unsaved)
                  </Selected>
                  <Ico s={14}><circle cx="7" cy="7" r="6" fill="#fff" stroke="#222" strokeWidth="1.200" /><circle cx="7" cy="7" r="2.500" fill="#222" /></Ico>
                </RootChip>
              </TreeRow>
              {NODES.map((n) => (
                <TreeRow key={n.name} $level={n.level}>
                  {n.twist ? <Twisty aria-label="Toggle"><Twist open={n.twist === "open"} /></Twisty> : <TwistyGap />}
                  <Chip>
                    {n.icons.map((ic, i) => <React.Fragment key={i}>{ic}</React.Fragment>)}
                    <NodeName>{n.name}</NodeName>
                  </Chip>
                </TreeRow>
              ))}
            </Tree>
            <Comments><PanelName>COMMENTS</PanelName><Round plus /><Grip /></Comments>
          </Side>

          <NavBar>
            {NAV.map(([n, menu, icon]) => <NavButton key={n} $menu={menu} aria-label={n}>{icon}{menu && <Caret w={6} />}</NavButton>)}
          </NavBar>

          <Side $right>
            <CubeBox><ViewCube /></CubeBox>
            <Palette>
              <PaletteBar>
                <Grip /><Round /><PanelName>SKETCH PALETTE</PanelName>
                <Ico s={10} h={8}><path d="M0 0v8l5-4zM5 0v8l5-4z" fill="#222" /></Ico>
              </PaletteBar>
              <PaletteBody>
                <OptionsHead><Caret w={8} />Options</OptionsHead>
                <OptionRow>
                  <OptionLabel as="span">Linetype</OptionLabel>
                  <OptionControls>
                    <button aria-label="Construction"><Ico><path d="M14 1.500L2.500 8 14 14.500" stroke="#777" strokeWidth="1.200" strokeDasharray="6 1.500" /><path d="M0 8h16" stroke="#e8722a" strokeWidth="1.300" strokeDasharray="3.500 1.200" /><path d="M11 .5l4 3M14.500 .5l-3 3M11 15.500l4-3M14.500 15.500l-3-3" stroke="#e8722a" /></Ico></button>
                    <button aria-label="Centerline"><Ico><path d="M1.500 6V3.500l2-2H10v2h4.500V6M1.500 10v2.500l2 2H10v-2h4.500V10" stroke="#aaa" strokeWidth="1.200" /><path d="M0 8h16" stroke="#f0b48e" strokeDasharray="3.500 1.200" /></Ico></button>
                  </OptionControls>
                </OptionRow>
                <OptionRow>
                  <OptionLabel as="span">Look At</OptionLabel>
                  <button aria-label="Look At"><LookAt /></button>
                </OptionRow>
                {options.map(([name, on], i) => (
                  <OptionRow key={name}>
                    <OptionLabel htmlFor={`opt${i}`}>{name}</OptionLabel>
                    <Check id={`opt${i}`} type="checkbox" checked={on} onChange={() => toggle(i)} />
                  </OptionRow>
                ))}
              </PaletteBody>
              <PaletteFoot><FinishButton>Finish Sketch</FinishButton></PaletteFoot>
            </Palette>
          </Side>
        </Overlay>
      </Viewport>

      <Timeline>
        {PLAY.map(([n, d]) => <Playback key={n} aria-label={n}><Ico><path d={d} fill="#484848" stroke="#484848" strokeWidth={n === "Play" ? 0 : 1.3} /></Ico></Playback>)}
        <History>
          {HISTORY.map((k, i) => (
            <Feature key={i} aria-label={`Feature ${i + 1}`}>
              {k === "s" ? <SketchIcon /> : k === "e" ? <ExtrudeIcon /> : <MoveIcon />}
              <svg width="24" height="8" fill="none"><path d={`M12 1V8M${i ? 0 : 11} 7H${i === 6 ? 13 : 24}`} stroke="#c6c6c6" strokeWidth="2" /></svg>
            </Feature>
          ))}
          <Marker width="12" height="32" viewBox="0 0 12 32"><path d="M0 0h12v5L7 10v22H5V10L0 5z" fill="#666" /></Marker>
        </History>
        <Settings aria-label="Timeline settings"><Gear /></Settings>
      </Timeline>

      <Taskbar>
        <Start aria-label="Start"><Ico><path d="M0 2.300L6.500 1.400V7.500H0zM7.500 1.200L16 0v7.500H7.500zM0 8.500h6.500v6.100L0 13.700zM7.500 8.500H16V16l-8.500-1.200z" fill="#fff" /></Ico></Start>
        <Search>
          <Ico s={17}><circle cx="10.500" cy="6.500" r="5.500" stroke="#222" strokeWidth="1.300" /><path d="M6.500 10.500L.5 16.500" stroke="#222" strokeWidth="1.300" /></Ico>
          <SearchInput aria-label="Search" placeholder="Type here to search" />
          <SearchArt />
        </Search>
        {TASKS.map(([n, open, current, icon]) => <TaskButton key={n} aria-label={n} $open={open} $current={current}>{icon}</TaskButton>)}
        <Tray>
          <Weather>
            <Ico s={23}><defs><linearGradient id="sun" x1="0" y1="0" x2=".6" y2="1"><stop stopColor="#f4bc3a" /><stop offset="1" stopColor="#f4690e" /></linearGradient></defs><circle cx="10" cy="11.500" r="10" fill="url(#sun)" /><circle cx="19" cy="3.500" r="3" fill="#d13a20" /></Ico>
            <span>68°F</span><span>Sunny</span>
          </Weather>
          <TrayIcons>
            <Ico s={14}><path d="M1 10l6-6 6 6" stroke="#fff" strokeWidth="1.300" /></Ico>
            <Ico s={16}><path d="M.7 5h2.500L6.500 1.500v11L3.200 9.500H.7z" stroke="#fff" /><circle cx="11.500" cy="10.500" r="4.500" fill="#e0323c" /><path d="M9.800 8.800l3.400 3.400M13.200 8.800l-3.400 3.400" stroke="#fff" strokeWidth="1.300" /></Ico>
            <Ico s={17}><path d="M5 2.500h11v8.500H5zM8 14.500h6M10.500 11v3.500M2.500 6v7H5" stroke="#fff" /><rect x="1" y="1.500" width="4" height="4" fill="#1b2843" stroke="#fff" /></Ico>
          </TrayIcons>
          <Clock>1:23 PM<br />5/25/2023</Clock>
          <button aria-label="Notifications"><Ico s={24}><path d="M0 0h16v12.500H9l-3.500 3V12.500H0z" fill="#fff" /><path d="M3 4h10M3 6.500h10M3 9h7" stroke="#1b2541" strokeWidth="1.200" /><circle cx="15.500" cy="15.500" r="8" fill="#30343f" stroke="#8a8f99" /><text x="15.500" y="19.500" fontFamily={SYS} fontSize="11" fill="#fff" textAnchor="middle">1</text></Ico></button>
          <ShowDesktop />
        </Tray>
      </Taskbar>
    </Shell>
  );
}
